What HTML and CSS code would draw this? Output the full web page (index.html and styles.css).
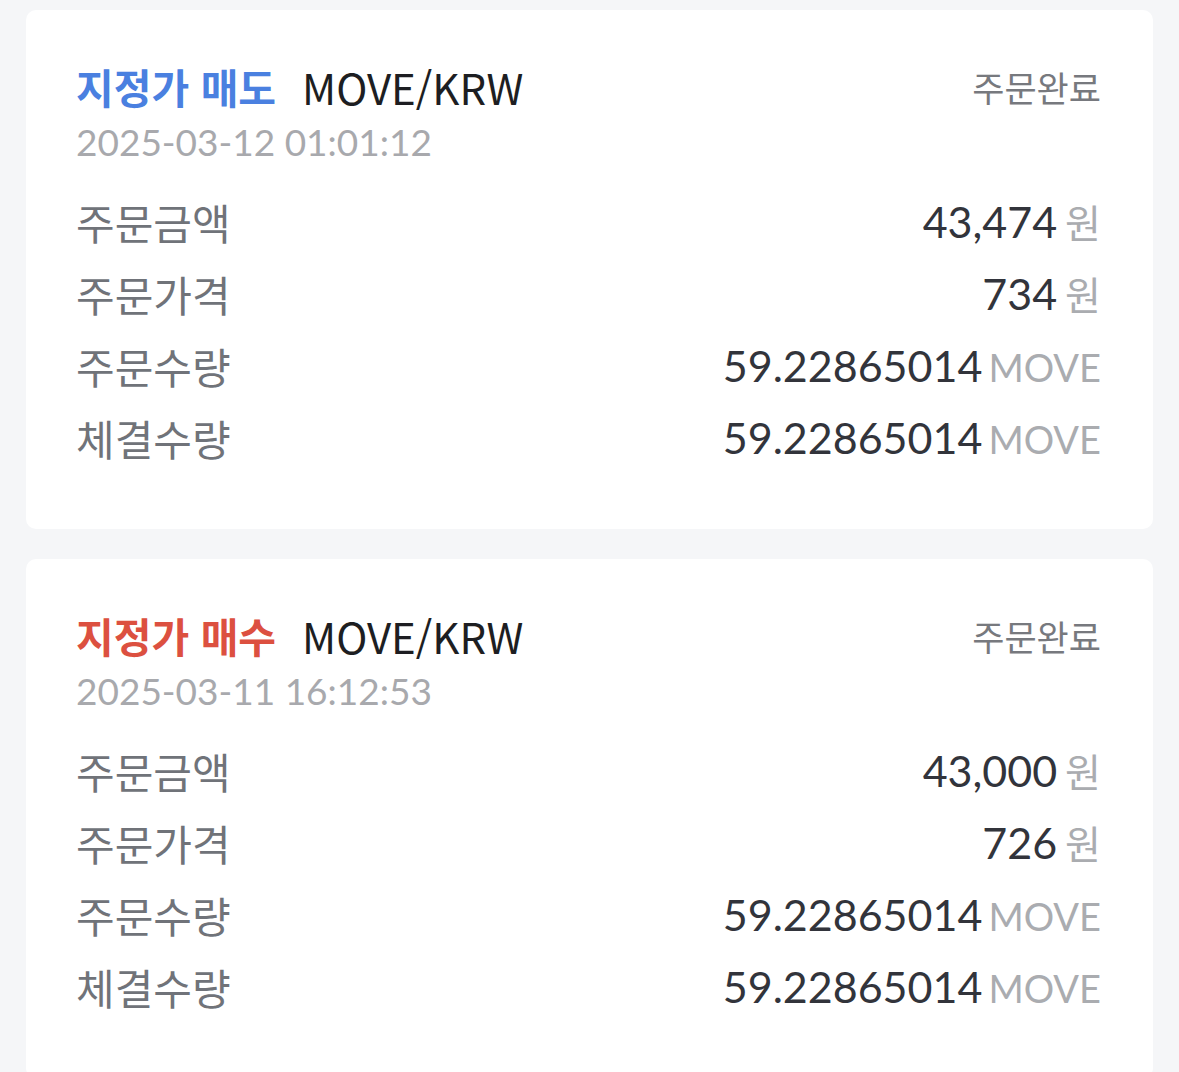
FILE: index.html
```html
<!DOCTYPE html>
<html lang="ko">
<head>
    <meta charset="UTF-8">
    <meta name="viewport" content="width=device-width, initial-scale=1.0">
    <title>주문내역</title>
    <link rel="stylesheet" href="styles.css">
</head>
<body>
    <div class="order-list">
        <div class="order-card">
            <div class="order-head">
                <div class="order-title">
                    <span class="order-type sell">지정가 매도</span>
                    <span class="order-market">MOVE/KRW</span>
                </div>
                <span class="order-status">주문완료</span>
            </div>
            <div class="order-date">2025-03-12 01:01:12</div>
            <div class="order-rows">
                <div class="order-row">
                    <span class="row-label">주문금액</span>
                    <span class="row-value">43,474<span class="unit krw">원</span></span>
                </div>
                <div class="order-row">
                    <span class="row-label">주문가격</span>
                    <span class="row-value">734<span class="unit krw">원</span></span>
                </div>
                <div class="order-row">
                    <span class="row-label">주문수량</span>
                    <span class="row-value">59.22865014<span class="unit">MOVE</span></span>
                </div>
                <div class="order-row">
                    <span class="row-label">체결수량</span>
                    <span class="row-value">59.22865014<span class="unit">MOVE</span></span>
                </div>
            </div>
        </div>

        <div class="order-card">
            <div class="order-head">
                <div class="order-title">
                    <span class="order-type buy">지정가 매수</span>
                    <span class="order-market">MOVE/KRW</span>
                </div>
                <span class="order-status">주문완료</span>
            </div>
            <div class="order-date">2025-03-11 16:12:53</div>
            <div class="order-rows">
                <div class="order-row">
                    <span class="row-label">주문금액</span>
                    <span class="row-value">43,000<span class="unit krw">원</span></span>
                </div>
                <div class="order-row">
                    <span class="row-label">주문가격</span>
                    <span class="row-value">726<span class="unit krw">원</span></span>
                </div>
                <div class="order-row">
                    <span class="row-label">주문수량</span>
                    <span class="row-value">59.22865014<span class="unit">MOVE</span></span>
                </div>
                <div class="order-row">
                    <span class="row-label">체결수량</span>
                    <span class="row-value">59.22865014<span class="unit">MOVE</span></span>
                </div>
            </div>
        </div>
    </div>
</body>
</html>
```

FILE: styles.css
```css
/* Global Reset */
* {
    margin: 0;
    padding: 0;
    box-sizing: border-box;
}

body {
    font-family: 'Noto Sans CJK KR', 'Noto Sans', sans-serif;
    background: #f5f6f8;
    height: 1072px;
    overflow: hidden;
}

.order-list {
    display: flex;
    flex-direction: column;
    gap: 30px;
    padding: 10px 26px 0;
}

.order-card {
    background: #fff;
    border-radius: 10px;
    padding: 48px 52px 56px 50px;
}

.order-head {
    display: flex;
    justify-content: space-between;
    align-items: center;
    height: 56px;
}

.order-title {
    display: flex;
    align-items: center;
    gap: 26px;
}

.order-type {
    font-size: 41px;
    font-weight: 700;
}

.order-type.sell {
    color: #4a80e0;
}

.order-type.buy {
    color: #dc5040;
}

.order-market {
    font-size: 42px;
    color: #1d1e22;
}

.order-status {
    font-size: 35px;
    color: #77797e;
}

.order-date {
    font-family: 'Lato', sans-serif;
    font-size: 37px;
    line-height: 56px;
    color: #a8a9ad;
}

.order-rows {
    margin-top: 15px;
}

.order-row {
    display: flex;
    justify-content: space-between;
    align-items: center;
    height: 72px;
}

.row-label {
    font-size: 42px;
    color: #707379;
}

.row-value {
    font-family: 'Lato', sans-serif;
    font-size: 43px;
    color: #32343b;
}

.unit {
    margin-left: 6px;
    font-size: 38px;
    color: #aaacb0;
}

.unit.krw {
    margin-left: 8px;
    font-family: 'Noto Sans CJK KR', sans-serif;
    font-size: 39px;
}
```
